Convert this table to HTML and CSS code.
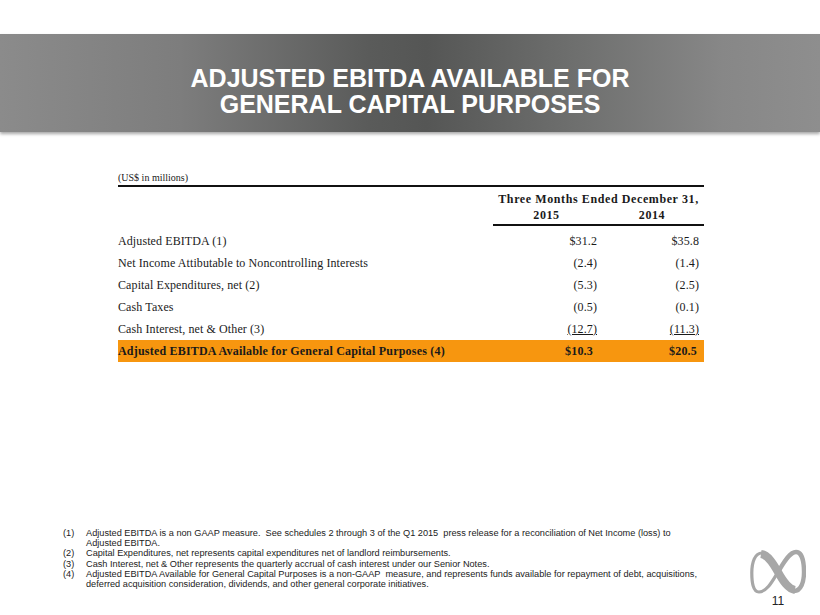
FILE: index.html
```html
<!DOCTYPE html>
<html lang="en">
<head>
<meta charset="utf-8">
<title>Adjusted EBITDA Available for General Capital Purposes</title>
<link rel="stylesheet" href="styles.css">
</head>
<body>
<div class="page">
  <header class="banner">
    <h1 class="title">ADJUSTED EBITDA AVAILABLE FOR<br>GENERAL CAPITAL PURPOSES</h1>
  </header>

  <section class="content">
    <div class="caption">(US$ in millions)</div>
    <div class="table">
      <div class="row head1">
        <div class="span">Three Months Ended December 31,</div>
      </div>
      <div class="row years">
        <div class="lbl"></div>
        <div class="yr">2015</div>
        <div class="yr">2014</div>
      </div>
      <div class="rows">
        <div class="row data">
          <div class="lbl">Adjusted EBITDA (1)</div>
          <div class="v1">$31.2</div>
          <div class="v2">$35.8</div>
        </div>
        <div class="row data">
          <div class="lbl">Net Income Attibutable to Noncontrolling Interests</div>
          <div class="v1">(2.4)</div>
          <div class="v2">(1.4)</div>
        </div>
        <div class="row data">
          <div class="lbl">Capital Expenditures, net (2)</div>
          <div class="v1">(5.3)</div>
          <div class="v2">(2.5)</div>
        </div>
        <div class="row data">
          <div class="lbl">Cash Taxes</div>
          <div class="v1">(0.5)</div>
          <div class="v2">(0.1)</div>
        </div>
        <div class="row data">
          <div class="lbl">Cash Interest, net &amp; Other (3)</div>
          <div class="v1"><span class="ul">(12.7)</span></div>
          <div class="v2"><span class="ul">(11.3)</span></div>
        </div>
        <div class="row data total">
          <div class="lbl">Adjusted EBITDA Available for General Capital Purposes (4)</div>
          <div class="v1">$10.3</div>
          <div class="v2">$20.5</div>
        </div>
      </div>
    </div>
  </section>

  <footer class="footer">
    <div class="notes">
      <div class="note"><span class="num">(1)</span><span class="txt">Adjusted EBITDA is a non GAAP measure.&nbsp; See schedules 2 through 3 of the Q1 2015 &nbsp;press release for a reconciliation of Net Income (loss) to<br>Adjusted EBITDA.</span></div>
      <div class="note"><span class="num">(2)</span><span class="txt">Capital Expenditures, net represents capital expenditures net of landlord reimbursements.</span></div>
      <div class="note"><span class="num">(3)</span><span class="txt">Cash Interest, net &amp; Other represents the quarterly accrual of cash interest under our Senior Notes.</span></div>
      <div class="note"><span class="num">(4)</span><span class="txt">Adjusted EBITDA Available for General Capital Purposes is a non-GAAP &nbsp;measure, and represents funds available for repayment of debt, acquisitions,<br>deferred acquisition consideration, dividends, and other general corporate initiatives.</span></div>
    </div>
    <div class="mark">
      <svg class="logo" width="56" height="46" viewBox="0 0 56 46" aria-hidden="true">
        <path d="M28,23 C23,31 17,43 9,43 C3,43 1.8,33 1.8,24 C1.8,13 5,4 12,4 C18,4 23,14 28,23" fill="none" stroke="#a7a7a7" stroke-width="3.2"/>
        <path d="M28,23 C33,15 39,3 46,3 C52,3 54,13 54,23 C54,33 51,42 44,42" fill="none" stroke="#a7a7a7" stroke-width="4.4"/>
        <path d="M11,5 C18,6 23,14 28,23 C33,32 38,40 45,41" fill="none" stroke="#a7a7a7" stroke-width="8"/>
      </svg>
      <div class="pg">11</div>
    </div>
  </footer>
</div>
</body>
</html>
```

FILE: styles.css
```css
body {
  margin: 0;
  background: #ffffff;
}

.page {
  width: 820px;
  height: 615px;
  overflow: hidden;
  display: flex;
  flex-direction: column;
  font-family: "Liberation Serif", "Times New Roman", serif;
  color: #1a1a1a;
}

.banner {
  margin-top: 34px;
  height: 98px;
  box-sizing: border-box;
  padding-top: 31px;
  background: linear-gradient(90deg, #8b8b8b 0%, #7d7d7d 22%, #5a5b5a 45%, #555655 52%, #6e6f6e 70%, #878787 88%, #8e8e8e 100%);
  box-shadow: 0 2px 3px rgba(0, 0, 0, 0.35);
}

.title {
  margin: 0;
  text-align: center;
  font-family: "Liberation Sans", Arial, sans-serif;
  font-weight: bold;
  font-size: 25px;
  line-height: 26px;
  color: #ffffff;
}

.content {
  margin-left: 118px;
  width: 586px;
}

.caption {
  margin-top: 40px;
  font-size: 10px;
  line-height: 12px;
  padding-bottom: 1px;
}

.table {
  border-top: 2px solid #111111;
}

.row {
  display: grid;
  grid-template-columns: 375px 107px 104px;
}

.head1 {
  padding-top: 4px;
}

.head1 .span {
  grid-column: 2 / 4;
  text-align: center;
  font-weight: bold;
  font-size: 12px;
  line-height: 16px;
  letter-spacing: 0.6px;
}

.years .yr {
  text-align: center;
  font-weight: bold;
  font-size: 12px;
  line-height: 17px;
  letter-spacing: 0.6px;
  border-bottom: 2px solid #111111;
}

.rows {
  padding-top: 4px;
}

.data {
  font-size: 12px;
  line-height: 22px;
  letter-spacing: 0.1px;
}

.data .v1 {
  text-align: right;
  padding-right: 3px;
}

.data .v2 {
  text-align: right;
  padding-right: 5px;
}

.ul {
  text-decoration: underline;
}

.total {
  background: #f7960f;
  font-weight: bold;
  letter-spacing: 0.2px;
}

.total .v1 {
  padding-right: 7px;
}

.total .v2 {
  padding-right: 7px;
}

.footer {
  margin-top: 166px;
  display: flex;
  align-items: flex-start;
  padding-left: 63px;
}

.notes {
  width: 640px;
  font-family: "Liberation Sans", Arial, sans-serif;
  font-size: 9.2px;
  line-height: 10.2px;
  color: #222222;
}

.note {
  display: flex;
}

.num {
  flex: none;
  width: 23px;
}

.mark {
  margin-left: 45px;
  margin-top: 21px;
  width: 60px;
  display: flex;
  flex-direction: column;
  align-items: center;
}

.logo {
  display: block;
}

.pg {
  font-family: "Liberation Sans", Arial, sans-serif;
  font-size: 12px;
  line-height: 12px;
  color: #222222;
}
```
